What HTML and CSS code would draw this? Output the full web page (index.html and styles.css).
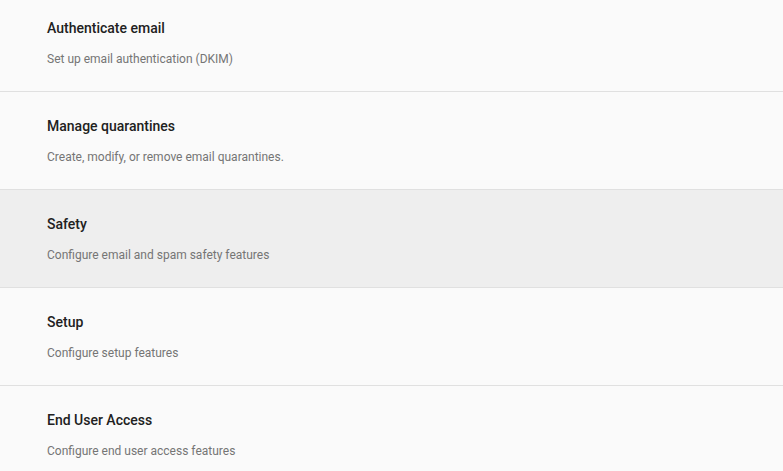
FILE: index.html
```html
<!DOCTYPE html>
<html>
<head>
<meta charset="utf-8">
<link rel="stylesheet" href="styles.css">
</head>
<body>
<div class="list">
  <div class="item">
    <div class="title">Authenticate email</div>
    <div class="desc">Set up email authentication (DKIM)</div>
  </div>
  <div class="item">
    <div class="title">Manage quarantines</div>
    <div class="desc">Create, modify, or remove email quarantines.</div>
  </div>
  <div class="item item-hover">
    <div class="title">Safety</div>
    <div class="desc">Configure email and spam safety features</div>
  </div>
  <div class="item">
    <div class="title">Setup</div>
    <div class="desc">Configure setup features</div>
  </div>
  <div class="item">
    <div class="title">End User Access</div>
    <div class="desc">Configure end user access features</div>
  </div>
</div>
</body>
</html>
```
FILE: styles.css
```css
html, body {
  margin: 0;
  padding: 0;
  background: #fafafa;
  overflow: hidden;
}
body {
  font-family: Roboto, "Noto Sans", sans-serif;
}
.list {
  display: flex;
  flex-direction: column;
  margin-top: -6px;
}
.item {
  padding: 24px 47px 24px;
  border-bottom: 1px solid #e0e0e0;
  display: flex;
  flex-direction: column;
  gap: 13px;
}
.item-hover {
  background: #eeeeee;
}
.title {
  font-size: 14px;
  line-height: 20px;
  font-weight: 500;
  color: #212121;
}
.desc {
  font-size: 12px;
  line-height: 16px;
  color: #757575;
}
```
